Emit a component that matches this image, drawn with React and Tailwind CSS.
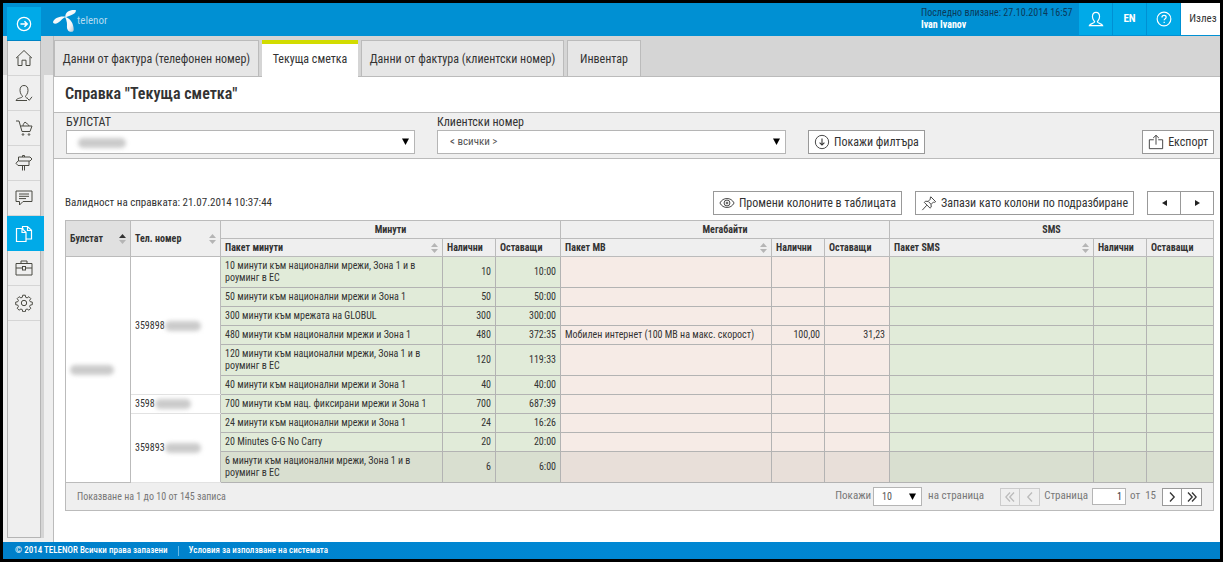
import { useState } from 'react';
import clsx from 'clsx';

const ICONS = {
  toggle: (
    <>
      <circle cx="9" cy="9" r="7.5" strokeWidth="1.4" />
      <path d="M5 9h7.500M9.5 5.9 12.600 9l-3.100 3.100" strokeWidth="1.7" />
    </>
  ),
  home: <path d="M1 9.2 9 1.5l8 7.7M3 7.8v8.7h4v-5.3h4v5.3h4V7.8" />,
  userCheck: (
    <>
      <path d="M13 14.5c-1.500-.6-2.500-1-2.500-2 0-.8 2.500-2.500 2.500-6C13 3 11.500 1.500 9 1.500S5 3 5 6.500c0 3.500 2.500 5.200 2.500 6 0 1.500-6 1.500-6.500 4h11" />
      <path d="m12.500 14.500 1.800 1.800 2.700-3.500" />
    </>
  ),
  user: <path d="M9 1.500c2.500 0 4 1.500 4 5 0 3.500-2.500 4.700-2.500 5.700 0 1.800 5.500 1.600 6 4.300h-15c.5-2.700 6-2.500 6-4.300 0-1-2.500-2.200-2.500-5.700 0-3.500 1.500-5 4-5z" strokeWidth="1.300" />,
  cart: (
    <>
      <path d="M1 2h3l3 10.500h8L17 7H5.500M8 7c0-2 1-2.500 2-4 1.300 1.500 3.500 2 4 4" />
      <circle cx="8" cy="15.500" r=".8" />
      <circle cx="14" cy="15.500" r=".8" />
    </>
  ),
  signpost: <path d="M7.500 3V1.500h2V3M3.500 3h11.500l2 2-2 2H3.500zM14 7v4.500H3l-2-2.200L3 7M7.500 11.500v5M9.500 11.500v5" />,
  message: <path d="M1 2h16v10.500H8L4.500 16v-3.500H1zM4 5h10M4 7.300h10M4 9.600h7" />,
  docs: <path d="M8.500 3.500H7.500V1.500h5l4 3.800v8.700h-5M12.500 1.500v4h4M1.500 3.500h5.500l4 3.800v9.200H1.500zM7 3.500v4h4" strokeWidth="1.200" />,
  briefcase: (
    <>
      <path d="M1 4.500h16v11.500H1zM6 4.500V2h6v2.500M1 9h6.500M10.500 9H17" />
      <rect x="7.500" y="7.500" width="3" height="3.500" />
    </>
  ),
  gear: (
    <>
      <circle cx="9" cy="9" r="2.700" />
      <path d="M7.700 1.200h2.600l.4 2.100 1.400.6 1.800-1.200 1.900 1.900-1.200 1.800.6 1.300 2.100.4v2.600l-2.100.4-.6 1.400 1.200 1.800-1.900 1.900-1.800-1.200-1.400.6-.4 2.100H7.700l-.4-2.100-1.400-.6-1.800 1.200-1.900-1.900 1.200-1.800-.6-1.400-2.100-.4V8.100l2.100-.4.6-1.300-1.200-1.800 1.900-1.900 1.800 1.200 1.400-.6z" />
    </>
  ),
  help: (
    <>
      <circle cx="9" cy="9" r="7.700" strokeWidth="1.300" />
      <path d="M6.700 7.200c0-3 4.700-2.800 4.700-.2 0 1.600-2.200 1.700-2.200 3.500M9.200 12v1.400" strokeWidth="1.400" />
    </>
  ),
  down: (
    <>
      <circle cx="9" cy="9" r="7.500" />
      <path d="M9 5v7.500M6.300 9.800 9 12.500l2.700-2.700" strokeWidth="1.200" />
    </>
  ),
  export: <path d="M6.500 6.500H1.500v10h15v-10h-5M9 12V1.500M5.800 4.500 9 1.500l3.200 3" />,
  eye: (
    <>
      <path d="M1 9c2-3.600 4.700-5 8-5s6 1.400 8 5c-2 3.600-4.700 5-8 5s-6-1.400-8-5z" />
      <circle cx="9" cy="9" r="3.300" />
      <circle cx="9" cy="9" r="1" />
    </>
  ),
  pin: <path d="m11 2 5.500 5.500-1.500.8-1-.4-2.700 2.700.2 3-1.300 1.200-6.500-6.500L5 7l3 .2 2.700-2.700-.4-1zM6.500 11.500 1.500 17M8.300 7.300l3 3.200" />,
};

function Icon({ name, size = 'size-[18px]', className }) {
  return (
    <svg viewBox="0 0 18 18" className={clsx('shrink-0 fill-none stroke-current', size, className)} strokeWidth="1" aria-hidden="true">
      {ICONS[name]}
    </svg>
  );
}

const MENU = [
  { icon: 'home', label: 'Начало' },
  { icon: 'userCheck', label: 'Профил' },
  { icon: 'cart', label: 'Поръчки' },
  { icon: 'signpost', label: 'Услуги' },
  { icon: 'message', label: 'Съобщения' },
  { icon: 'docs', label: 'Справки' },
  { icon: 'briefcase', label: 'Документи' },
  { icon: 'gear', label: 'Настройки' },
];

const TABS = [
  { label: 'Данни от фактура (телефонен номер)', width: 'w-[205px]' },
  { label: 'Текуща сметка', width: 'w-24' },
  { label: 'Данни от фактура (клиентски номер)', width: 'w-[203px]' },
  { label: 'Инвентар', width: 'w-[74px]' },
];

const ROWS = [
  { phone: '359898', span: 6, minutes: '10 минути към национални мрежи, Зона 1 и в роуминг в ЕС', total: '10', left: '10:00' },
  { minutes: '50 минути към национални мрежи и Зона 1', total: '50', left: '50:00' },
  { minutes: '300 минути към мрежата на GLOBUL', total: '300', left: '300:00' },
  { minutes: '480 минути към национални мрежи и Зона 1', total: '480', left: '372:35', mb: 'Мобилен интернет (100 MB на макс. скорост)', mbTotal: '100,00', mbLeft: '31,23' },
  { minutes: '120 минути към национални мрежи, Зона 1 и в роуминг в ЕС', total: '120', left: '119:33' },
  { minutes: '40 минути към национални мрежи и Зона 1', total: '40', left: '40:00' },
  { phone: '3598', span: 1, minutes: '700 минути към нац. фиксирани мрежи и Зона 1', total: '700', left: '687:39' },
  { phone: '359893', span: 3, minutes: '24 минути към национални мрежи и Зона 1', total: '24', left: '16:26' },
  { minutes: '20 Minutes G-G No Carry', total: '20', left: '20:00' },
  { minutes: '6 минути към национални мрежи, Зона 1 и в роуминг в ЕС', total: '6', left: '6:00', hover: true },
];

function Logo() {
  return (
    <a href="#" className="flex items-center text-[#b5daf0]">
      <svg viewBox="0 0 24 24" className="size-6" aria-hidden="true">
        <defs>
          <linearGradient id="blade" x1="0" y1="0" x2="1" y2="1">
            <stop offset="0" stopColor="#fff" />
            <stop offset=".6" stopColor="#f4f6f8" />
            <stop offset="1" stopColor="#b4c4d0" />
          </linearGradient>
        </defs>
        <g fill="url(#blade)">
          <path d="M0 13C1.500 9 6.500 6.600 13.300 7.700 10 8.500 8 11.800 5 13.800 3 15 .2 15.300 0 13z" />
          <path d="M12.300 7.800C12 3 17 .3 22.800 1c.7 3.500-3.600 5-9.500 6.900z" />
          <path d="M12 7.700c5 1.300 9 6.800 8.700 13.300-.3 2.500-4.300 2.300-5.800.3-1.600-2.200-.6-4.700-1-7.500-.3-2.300-1-4.300-1.900-6.100z" />
        </g>
      </svg>
      <span className="text-[11px]">telenor</span>
    </a>
  );
}

function Caret({ className }) {
  return (
    <svg viewBox="0 0 7 7" className={clsx('pointer-events-none absolute size-[7px] fill-black', className)} aria-hidden="true">
      <path d="M0 .5h7L3.500 7z" />
    </svg>
  );
}

function Sort({ asc }) {
  return (
    <svg viewBox="0 0 7 10" className="h-[10px] w-[7px] shrink-0 fill-[#b5b5b5]" aria-hidden="true">
      <path d="M0 4 3.500 0 7 4z" className={asc ? 'fill-[#333]' : ''} />
      <path d="M0 6h7L3.500 10z" />
    </svg>
  );
}

function Masked({ className }) {
  return <span className={clsx('inline-block h-2.5 rounded-full bg-[#cbcbcb] align-middle blur-[2px]', className)} />;
}

function Filter({ id, label, children, overlay }) {
  return (
    <div className="max-w-[349px] flex-1">
      <label htmlFor={id} className="block text-xs leading-4">{label}</label>
      <div className="relative">
        <select id={id} className="block h-6 w-full appearance-none border border-[#b5b5b5] bg-white pl-3 text-[11px] text-[#555]">
          {children}
        </select>
        {overlay}
        <Caret className="top-2 right-1.5" />
      </div>
    </div>
  );
}

function Button({ icon, children }) {
  return (
    <button className="flex h-6 items-center gap-1 border border-[#999] bg-white px-[5px] text-xs whitespace-nowrap">
      <Icon name={icon} size="size-4" />
      {children}
    </button>
  );
}

function PageButton({ label, disabled, path, className }) {
  return (
    <button
      aria-label={label}
      disabled={disabled}
      className={clsx('flex h-[18px] w-5 items-center justify-center border', disabled ? 'border-[#ccc] text-[#bbb]' : 'border-[#999] bg-white text-[#333]', className)}
    >
      <svg viewBox="0 0 10 10" className="size-2.5 fill-none stroke-current" strokeWidth="1.300" aria-hidden="true">
        <path d={path} />
      </svg>
    </button>
  );
}

function SortHeader({ children, asc }) {
  return (
    <span className="flex items-center justify-between">
      {children}
      <Sort asc={asc} />
    </span>
  );
}

function PackagesTable() {
  const th = 'border border-[#bbb] px-1 text-left font-bold';
  const td = 'border border-[#b3b3b3] px-1 py-[3px]';

  return (
    <table className="w-full table-fixed border-collapse text-[10px] leading-3">
      <colgroup>
        <col className="w-[65px]" />
        <col className="w-[90px]" />
        <col className="w-[222px]" />
        <col className="w-[53px]" />
        <col className="w-[65px]" />
        <col className="w-[211px]" />
        <col className="w-[53px]" />
        <col className="w-[65px]" />
        <col />
        <col className="w-[53px]" />
        <col className="w-[67px]" />
      </colgroup>
      <thead className="bg-[#efefef]">
        <tr className="h-[18px]">
          <th rowSpan={2} className={clsx(th, 'bg-[#e0e0e0]')}><SortHeader asc>Булстат</SortHeader></th>
          <th rowSpan={2} className={th}><SortHeader>Тел. номер</SortHeader></th>
          <th colSpan={3} className="border border-[#bbb] font-bold">Минути</th>
          <th colSpan={3} className="border border-[#bbb] font-bold">Мегабайти</th>
          <th colSpan={3} className="border border-[#bbb] font-bold">SMS</th>
        </tr>
        <tr className="h-[18px]">
          {['Пакет минути', 'Пакет MB', 'Пакет SMS'].map(name => [
            <th key={name} className={th}><SortHeader>{name}</SortHeader></th>,
            <th key={name + '-total'} className={th}>Налични</th>,
            <th key={name + '-left'} className={th}>Оставащи</th>,
          ])}
        </tr>
      </thead>
      <tbody>
        {ROWS.map((row, i) => {
          const green = row.hover ? 'bg-[#d9dfd0]' : 'bg-[#e1ebd9]';
          const pink = row.hover ? 'bg-[#e8dfd9]' : 'bg-[#f6ebe6]';
          return (
            <tr key={row.minutes}>
              {i === 0 && (
                <td rowSpan={ROWS.length} className="border border-[#bbb] px-1">
                  <Masked className="w-11" />
                </td>
              )}
              {row.phone && (
                <td rowSpan={row.span} className="border border-x-[#bbb] border-y-[#e2e2e2] px-1">
                  {row.phone}<Masked className="w-9" />
                </td>
              )}
              <td className={clsx(td, green)}>{row.minutes}</td>
              <td className={clsx(td, green, 'text-right')}>{row.total}</td>
              <td className={clsx(td, green, 'text-right')}>{row.left}</td>
              <td className={clsx(td, pink, 'whitespace-nowrap')}>{row.mb}</td>
              <td className={clsx(td, pink, 'text-right')}>{row.mbTotal}</td>
              <td className={clsx(td, pink, 'text-right')}>{row.mbLeft}</td>
              <td className={clsx(td, green)} />
              <td className={clsx(td, green)} />
              <td className={clsx(td, green)} />
            </tr>
          );
        })}
      </tbody>
    </table>
  );
}

function Pager() {
  const [page, setPage] = useState('1');

  return (
    <div className="flex h-7 items-center border border-t-0 border-[#bbb] bg-[#efefef] px-[11px] text-[11px] text-[#777]">
      <span className="mr-auto text-[10px]">Показване на 1 до 10 от 145 записа</span>
      <label htmlFor="page-size" className="mr-0.5">Покажи</label>
      <div className="relative mr-1.5">
        <select id="page-size" defaultValue="10" className="block h-[19px] w-[49px] appearance-none border border-[#b5b5b5] bg-white pl-2 text-[10px] text-[#555]">
          <option>10</option>
          <option>20</option>
          <option>50</option>
        </select>
        <Caret className="top-1.5 right-1.5" />
      </div>
      <span className="mr-4">на страница</span>
      <PageButton label="Първа" disabled path="M5 .5.8 5 5 9.500M9 .5 4.800 5 9 9.500" />
      <PageButton label="Предишна" disabled path="M7 .5 2.800 5 7 9.500" className="border-l-0" />
      <label htmlFor="page-number" className="mx-1">Страница</label>
      <input
        id="page-number"
        value={page}
        onChange={(e) => setPage(e.target.value)}
        className="h-[17px] w-[34px] border border-[#b5b5b5] bg-white px-[3px] text-right text-[10px] text-[#333]"
      />
      <span className="mr-1.5 ml-1">от&nbsp; 15</span>
      <PageButton label="Следваща" path="M3 .5 7.200 5 3 9.500" />
      <PageButton label="Последна" path="M1 .5 5.200 5 1 9.500M5 .5 9.200 5 5 9.500" className="border-l-0" />
    </div>
  );
}

export default function App() {
  const [activeTab, setActiveTab] = useState(1);

  return (
    <div lang="bg" className="flex min-h-screen flex-col border-[3px] border-black bg-[#efefef] font-['Roboto_Condensed',Roboto,sans-serif] text-[#333]">
      <header className="flex h-[33px] items-start bg-[#0090d3] pl-[50px]">
        <div className="flex h-9 items-center"><Logo /></div>
        <div className="ml-auto w-[158px] pt-1 text-[10px] leading-3">
          <div className="text-[#0b3a5a]">Последно влизане: 27.10.2014 16:57</div>
          <div className="font-bold text-white">Ivan Ivanov</div>
        </div>
        <div className="flex h-8 gap-px text-white">
          <button aria-label="Профил" className="flex w-[33px] items-center justify-center bg-[#00aae8]"><Icon name="user" size="size-4" /></button>
          <button className="w-[33px] bg-[#00aae8] text-[11px] font-bold">EN</button>
          <button aria-label="Помощ" className="flex w-[33px] items-center justify-center bg-[#00aae8]"><Icon name="help" size="size-4" /></button>
          <button className="w-[39px] bg-white pl-[5px] text-[11px] text-[#333]">Излез</button>
        </div>
      </header>

      <div className="flex flex-1 bg-[linear-gradient(#d5d5d5_39px,#efefef_39px)]">
        <aside className="relative -mt-[29px] mr-[3px] mb-1 ml-1 flex w-[34px] flex-col bg-[#efefef]">
          <button aria-label="Меню" className="flex h-[34px] items-center justify-center border-b border-[#0084c4] bg-[#00aae8] text-white">
            <Icon name="toggle" size="size-4" />
          </button>
          <nav className="flex flex-1 flex-col border border-t-0 border-[#b5b5b5] shadow-[3px_0_0_#d5d5d5]">
            {MENU.map(item => {
              const active = item.icon === 'docs';
              return (
                <a
                  key={item.icon}
                  href="#"
                  aria-label={item.label}
                  className={clsx('flex h-[35px] items-center justify-center', active ? '-mr-1 -ml-px bg-[#00aae8] pr-1 text-white' : 'border-b border-[#d5d5d5] text-[#4a4a42]')}
                >
                  <Icon name={item.icon} />
                </a>
              );
            })}
          </nav>
        </aside>

        <main className="ml-[9px] flex min-w-0 flex-1 flex-col border-l border-[#bbb] bg-white">
          <nav className="flex h-[41px] items-end gap-[3px] border-b border-[#bbb] bg-[#d5d5d5]">
            {TABS.map((tab, i) => (
              <button
                key={tab.label}
                onClick={() => setActiveTab(i)}
                className={clsx(
                  'shrink-0 text-xs whitespace-nowrap',
                  tab.width,
                  i === activeTab
                    ? '-mb-px h-[37px] border-t-4 border-[#d2dc00] bg-white pb-1'
                    : 'h-9 border border-b-0 border-[#bbb] bg-[#e6e6e6]'
                )}
              >
                {tab.label}
              </button>
            ))}
          </nav>

          <h1 className="px-[11px] pt-[5px] pb-1.5 text-base leading-6 font-semibold">Справка "Текуща сметка"</h1>

          <form className="flex items-end gap-[22px] border-y border-[#bbb] bg-[#efefef] pt-px pr-1.5 pb-1 pl-3">
            <Filter id="bulstat" label="БУЛСТАТ" overlay={<Masked className="pointer-events-none absolute top-2 left-3 w-12" />}>
              <option> </option>
            </Filter>
            <Filter id="client" label="Клиентски номер">
              <option>&lt; всички &gt;</option>
            </Filter>
            <Button icon="down">Покажи филтъра</Button>
            <div className="ml-auto"><Button icon="export">Експорт</Button></div>
          </form>

          <section className="pt-8 pr-1.5 pb-7 pl-[11px]">
            <div className="mb-[5px] flex items-center gap-[13px]">
              <p className="mr-auto text-[11px]">Валидност на справката: 21.07.2014 10:37:44</p>
              <Button icon="eye">Промени колоните в таблицата</Button>
              <Button icon="pin">Запази като колони по подразбиране</Button>
              <div className="flex">
                <button aria-label="Наляво" className="flex h-6 w-[34px] items-center justify-center border border-[#999]">
                  <svg viewBox="0 0 5 6" className="h-1.5 w-[5px] fill-[#222]"><path d="M5 0v6L0 3z" /></svg>
                </button>
                <button aria-label="Надясно" className="flex h-6 w-[33px] items-center justify-center border border-l-0 border-[#999]">
                  <svg viewBox="0 0 5 6" className="h-1.5 w-[5px] fill-[#222]"><path d="M0 0v6l5-3z" /></svg>
                </button>
              </div>
            </div>
            <PackagesTable />
            <Pager />
          </section>
        </main>
      </div>

      <footer className="flex h-[17px] items-center bg-linear-to-r from-[#0080ca] via-[#0088d4] to-[#0080ca] pl-3 text-[9px] font-medium text-white">
        <span>© 2014 TELENOR Всички права запазени</span>
        <span className="mx-2.5 h-2.5 border-l border-[#66b8e4]" />
        <a href="#">Условия за използване на системата</a>
      </footer>
    </div>
  );
}
